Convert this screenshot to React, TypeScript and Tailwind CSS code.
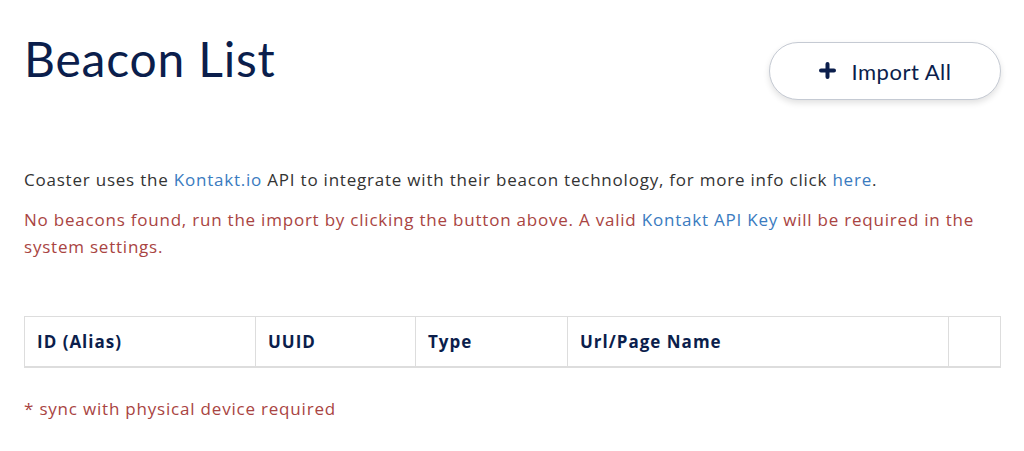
import React from 'react';

const columns = [
  { label: 'ID (Alias)', width: 'w-[231px]' },
  { label: 'UUID', width: 'w-[160px]' },
  { label: 'Type', width: 'w-[152px]' },
  { label: 'Url/Page Name', width: 'w-[381px]' },
  { label: '', width: 'flex-1' },
];

const App = () => {
  return (
    <div className="w-[1024px] h-[451px] bg-white overflow-hidden pl-6 pr-[23px] font-['Open_Sans',sans-serif]">
      {/* header */}
      <div className="flex items-start justify-between pt-[30px]">
        <h1 className="font-['Lato',sans-serif] text-[48px] leading-[58px] text-[#0b1e4c] font-normal tracking-[0.8px]">Beacon List</h1>
        <button className="mt-[12px] w-[232px] h-[58px] rounded-full border border-[#c5cad3] bg-white shadow-[0_3px_6px_rgba(0,0,0,0.12)] flex items-center justify-center gap-[16px] text-[22px] tracking-[0.5px] text-[#0b1e4c] font-['Lato',sans-serif]">
          <svg width="17" height="17" viewBox="0 0 17 17" className="mb-[1px]">
            <path d="M8.5 2v13M2 8.5h13" stroke="#0b1e4c" strokeWidth="4" strokeLinecap="round" />
          </svg>
          <span>Import All</span>
        </button>
      </div>

      {/* info text */}
      <div className="mt-[66px] text-[17px] leading-[27px] tracking-[0.78px]">
        <p className="text-[#333333]">
          Coaster uses the <a className="text-[#3a7bbf]">Kontakt.io</a> API to integrate with their beacon technology, for more info click <a className="text-[#3a7bbf]">here</a>.
        </p>
        <p className="mt-[13px] text-[#a94442]">
          <span>No beacons found, run the import by clicking the button above. A valid </span>
          <a className="text-[#3a7bbf]">Kontakt API Key</a>
          <span> will be required in the</span>
          <br />
          <span>system settings.</span>
        </p>
      </div>

      {/* table header */}
      <div className="mt-[56px] flex h-[52px] border border-[#dddddd] border-b-2">
        {columns.map((c, i) => (
          <div
            key={i}
            className={`${c.width} flex items-center px-3 text-[17px] font-bold tracking-[1px] text-[#0b1e4c] ${i < columns.length - 1 ? 'border-r border-[#dddddd]' : ''}`}
          >
            {c.label}
          </div>
        ))}
      </div>

      <p className="mt-[28px] text-[17px] tracking-[0.8px] text-[#a94442]">* sync with physical device required</p>
    </div>
  );
};

export default App;
